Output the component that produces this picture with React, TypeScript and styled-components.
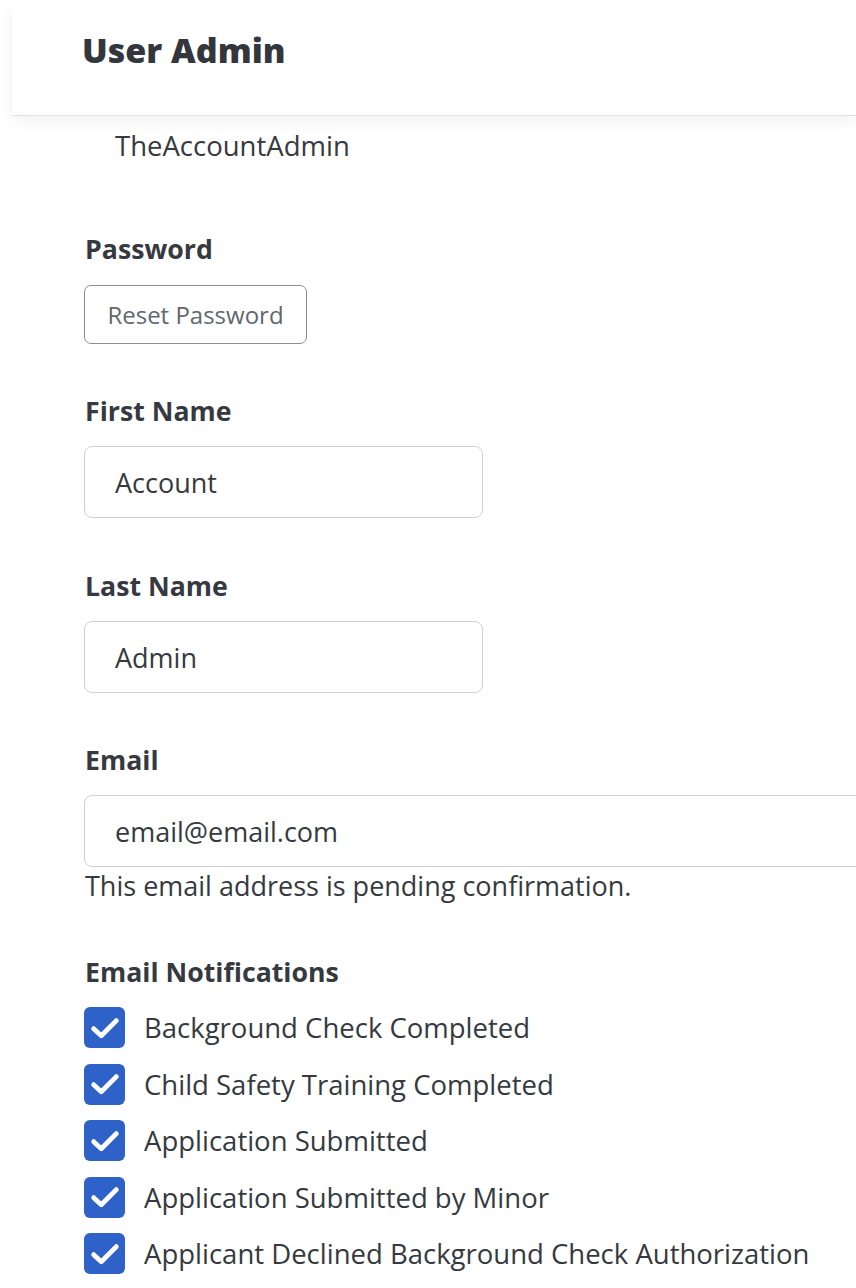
import styled, { createGlobalStyle } from 'styled-components';

const GlobalStyle = createGlobalStyle`
	body {
		margin: 0;
		background: #ffffff;
		font-family: 'Open Sans', Lato, sans-serif;
		color: #363a40;
	}
`;

const Header = styled.header`
	height: 115px;
	margin-left: 12px;
	display: flex;
	align-items: flex-start;
	border-bottom: 1px solid #e2e2e2;
	box-shadow: 0 6px 14px rgba(0, 0, 0, 0.05);
	position: relative;
	z-index: 1;
`;

const Title = styled.h1`
	margin: 30px 0 0 70px;
	font-size: 34px;
	font-weight: 800;
	line-height: 40px;
	color: #33373d;
`;

const Content = styled.main`
	padding: 12px 0 40px 84px;
	overflow: hidden;
`;

const Username = styled.div`
	margin-left: 31px;
	font-size: 27.5px;
	line-height: 36px;
`;

const Field = styled.section<{ $top: number }>`
	margin-top: ${(p) => p.$top}px;
	display: flex;
	flex-direction: column;
	align-items: flex-start;
`;

const Label = styled.label`
	margin-left: 1px;
	font-size: 26.7px;
	font-weight: 700;
	line-height: 36px;
	color: #363a40;
`;

const OutlineButton = styled.button`
	margin-top: 18px;
	width: 223px;
	height: 59px;
	border: 1px solid #8a8d92;
	border-radius: 7px;
	background: #fff;
	font-family: inherit;
	font-size: 24px;
	color: #62676d;
	cursor: pointer;
`;

const TextInput = styled.input<{ $wide?: boolean }>`
	margin-top: 17px;
	box-sizing: border-box;
	width: ${(p) => (p.$wide ? '800px' : '399px')};
	height: 72px;
	padding: 0 30px;
	border: 1px solid #cfd0d2;
	border-radius: 8px;
	font-family: inherit;
	font-size: 27px;
	color: #363a40;
	outline: none;
`;

const Helper = styled.div`
	margin-left: 1px;
	font-size: 27px;
	line-height: 38px;
	color: #363a40;
`;

const CheckList = styled.ul`
	list-style: none;
	margin: 17px 0 0;
	padding: 0;
	display: flex;
	flex-direction: column;
	gap: 15.5px;
`;

const CheckRow = styled.li`
	display: flex;
	align-items: center;
	gap: 19px;
	font-size: 27.5px;
	line-height: 41px;
	color: #363a40;
`;

const Box = styled.span`
	width: 41px;
	height: 41px;
	border-radius: 6px;
	background: #2f62c9;
	display: flex;
	align-items: center;
	justify-content: center;
	flex-shrink: 0;
`;

const notifications = [
	'Background Check Completed',
	'Child Safety Training Completed',
	'Application Submitted',
	'Application Submitted by Minor',
	'Applicant Declined Background Check Authorization',
];

const Check = () => (
	<svg width="32" height="32" viewBox="0 0 24 24" fill="none">
		<path
			d="M3.5 12.5L9.2 17.8L20.5 6.5"
			stroke="#fff"
			strokeWidth="3.6"
			strokeLinecap="round"
			strokeLinejoin="round"
		/>
	</svg>
);

const App = () => {
	return (
		<>
			<GlobalStyle />
			<Header>
				<Title>User Admin</Title>
			</Header>
			<Content>
				<Username>TheAccountAdmin</Username>
				<Field $top={67}>
					<Label>Password</Label>
					<OutlineButton>Reset Password</OutlineButton>
				</Field>
				<Field $top={49}>
					<Label>First Name</Label>
					<TextInput defaultValue="Account" />
				</Field>
				<Field $top={50}>
					<Label>Last Name</Label>
					<TextInput defaultValue="Admin" />
				</Field>
				<Field $top={49}>
					<Label>Email</Label>
					<TextInput $wide defaultValue="email@email.com" />
					<Helper>This email address is pending confirmation.</Helper>
				</Field>
				<Field $top={49}>
					<Label>Email Notifications</Label>
					<CheckList>
						{notifications.map((n) => (
							<CheckRow key={n}>
								<Box>
									<Check />
								</Box>
								{n}
							</CheckRow>
						))}
					</CheckList>
				</Field>
			</Content>
		</>
	);
};

export default App;
